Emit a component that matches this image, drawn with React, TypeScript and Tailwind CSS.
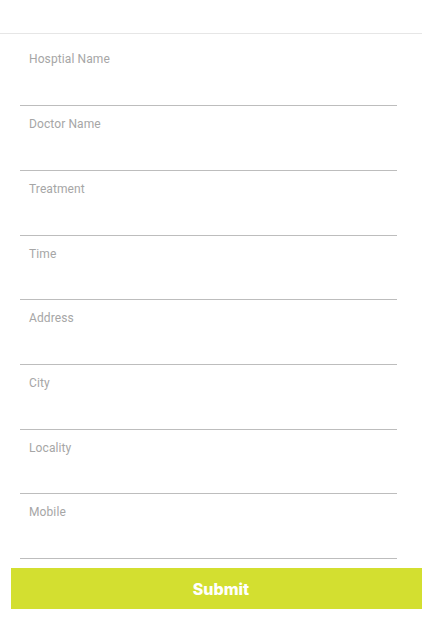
import React from "react";

const fields = [
  { label: "Hosptial Name", h: "h-[65px]" },
  { label: "Doctor Name", h: "h-[65px]" },
  { label: "Treatment", h: "h-[65px]" },
  { label: "Time", h: "h-[64px]" },
  { label: "Address", h: "h-[65px]" },
  { label: "City", h: "h-[65px]" },
  { label: "Locality", h: "h-[64px]" },
  { label: "Mobile", h: "h-[65px]" },
];

export default function App() {
  return (
    <div className="w-[422px] min-h-[638px] bg-white overflow-hidden" style={{ fontFamily: "Roboto, 'Noto Sans', sans-serif" }}>
      <div className="h-[34px] border-b border-[#e6e6e6]" />
      <div className="pt-[7px]">
        {fields.map((f) => (
          <div key={f.label} className={`ml-[20px] w-[377px] ${f.h} border-b border-[#bdbdbd] pt-[10px] pl-[9px]`}>
            <span className="block text-[12px] leading-[16px] text-[#a6a6a6] font-normal tracking-[0.1px]">{f.label}</span>
          </div>
        ))}
      </div>
      <button className="mt-[9px] ml-[11px] w-[420px] h-[41px] bg-[#d3df30] text-white text-[16px] font-extrabold flex items-center justify-center" style={{ fontFamily: "Inter, Roboto, sans-serif" }}>
        Submit
      </button>
    </div>
  );
}
